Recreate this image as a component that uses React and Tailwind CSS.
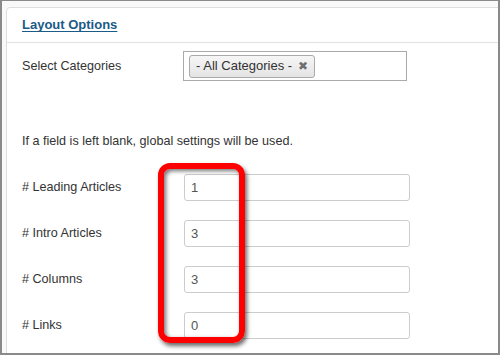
import React from 'react';

const fields = [
  { label: '# Leading Articles', value: '1' },
  { label: '# Intro Articles', value: '3' },
  { label: '# Columns', value: '3' },
  { label: '# Links', value: '0' },
];

export default function App() {
  return (
    <div className="relative w-[500px] h-[355px] overflow-hidden border-2 border-t border-[#8a8a8a] bg-[#f9f9f9] font-['Liberation_Sans',Arial,sans-serif] text-[12.6px] text-[#333]">
      {/* panel */}
      <div className="mt-[6px] ml-[4px] w-[520px] h-[400px] rounded-[4px] border border-[#dedede] bg-white">
        <div className="h-[35px] border-b border-[#e2e2e2] pl-[15px] flex items-center">
          <a href="#" className="font-bold text-[13px] text-[#1a5b88] underline underline-offset-[2px]">
            Layout Options
          </a>
        </div>

        <div className="pl-[15px] pt-[8px]">
          <div className="flex items-center">
            <span className="w-[161px]">Select Categories</span>
            <div className="w-[224px] h-[30px] border border-[#aaa] bg-white flex items-center px-[5px]">
              <span className="h-[23px] flex items-center gap-[6px] px-[6px] rounded-[3px] border border-[#aaa] bg-gradient-to-b from-[#f6f6f6] to-[#e4e4e4] text-[#333] text-[13px]">
                - All Categories -
                <span className="text-[#6f6f6f] text-[12px] leading-none font-['DejaVu_Sans',sans-serif]">✖</span>
              </span>
            </div>
          </div>

          <p className="mt-[51px] leading-[18px]">If a field is left blank, global settings will be used.</p>

          <div className="mt-[24px] flex flex-col gap-[19px]">
            {fields.map((f) => (
              <div key={f.label} className="flex items-center">
                <span className="w-[162px]">{f.label}</span>
                <div className="w-[226px] h-[27px] rounded-[3px] border border-[#ccc] bg-white flex items-center pl-[6px] text-[#555] text-[13px]">
                  {f.value}
                </div>
              </div>
            ))}
          </div>
        </div>
      </div>

      {/* red highlight */}
      <div className="absolute left-[156px] top-[162px] w-[87px] h-[180px] rounded-[12px] border-[6px] border-[#ff0000] shadow-[2px_3px_4px_rgba(0,0,0,0.6),inset_2px_2px_4px_rgba(0,0,0,0.55)]" />
    </div>
  );
}
